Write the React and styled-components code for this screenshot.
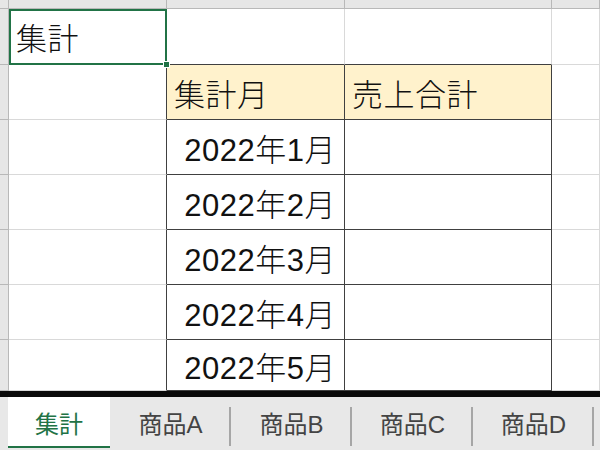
import styled, { createGlobalStyle } from 'styled-components';

const GlobalStyle = createGlobalStyle`
  html,
  body {
    margin: 0;
    padding: 0;
    background: #ffffff;
  }
  body {
    width: 600px;
    height: 450px;
    overflow: hidden;
    font-family: "Liberation Sans", "Noto Sans CJK JP", sans-serif;
  }
`;

const GRID = '#d9d9d9';
const EDGE = '#404040';
const HEAD = '#b8b8b8';
const GREEN = '#217346';

const COL_WIDTHS = [9, 158, 178, 207, 48];
const ROW_HEIGHTS = [9, 56, 55, 55, 55, 55, 55, 51];

const MONTHS = [1, 2, 3, 4, 5];

// one entry per sheet row (A..D), row headers are added while rendering
const sheet = [
  [{ text: '集計', selected: true }, {}, {}, {}],
  [
    {},
    { text: '集計月', fill: '#fff2cc' },
    { text: '売上合計', fill: '#fff2cc' },
    {},
  ],
  ...MONTHS.map((m) => [
    {},
    { text: `2022年${m}月`, align: 'right' },
    {},
    {},
  ]),
];

const inTable = (r, c) => r >= 1 && c >= 1 && c <= 2;

const borderFor = (r, c) => {
  const right = inTable(r, c) || (c === 0 && r >= 1) ? EDGE : GRID;
  const bottom = inTable(r, c) || (r === 0 && (c === 1 || c === 2)) ? EDGE : GRID;
  return { right, bottom };
};

const tabs = ['集計', '商品A', '商品B', '商品C', '商品D'];

export default function App() {
  return (
    <>
      <GlobalStyle />
      <Window>
        <Sheet>
          <HeaderCell />
          {COL_WIDTHS.slice(1).map((_, i) => (
            <HeaderCell key={`col-${i}`} />
          ))}
          {sheet.map((row, r) => [
            <HeaderCell key={`row-${r}`} />,
            ...row.map((cell, c) => {
              const { right, bottom } = borderFor(r, c);
              return (
                <Cell
                  key={`${r}-${c}`}
                  $right={right}
                  $bottom={bottom}
                  $fill={cell.fill}
                  $align={cell.align}
                  $selected={cell.selected}
                >
                  {cell.text}
                  {cell.selected && <FillHandle />}
                </Cell>
              );
            }),
          ])}
        </Sheet>
        <TabBar>
          <TabLead />
          {tabs.map((name, i) => (
            <Tab key={name} $active={i === 0}>
              {name}
            </Tab>
          ))}
        </TabBar>
      </Window>
    </>
  );
}

const Window = styled.div`
  display: flex;
  flex-direction: column;
  width: 600px;
  height: 450px;
  overflow: hidden;
`;

const Sheet = styled.div`
  display: grid;
  grid-template-columns: ${COL_WIDTHS.slice(0, -1).map((w) => `${w}px`).join(' ')} 1fr;
  grid-template-rows: ${ROW_HEIGHTS.map((h) => `${h}px`).join(' ')};
  height: 391px;
  overflow: hidden;
  flex-shrink: 0;
`;

const HeaderCell = styled.div`
  box-sizing: border-box;
  background: #e6e6e6;
  border-right: 1px solid ${HEAD};
  border-bottom: 1px solid ${HEAD};
`;

const Cell = styled.div`
  position: relative;
  box-sizing: border-box;
  display: flex;
  align-items: center;
  justify-content: ${(p) => (p.$align === 'right' ? 'flex-end' : 'flex-start')};
  padding: 0 8px 0 7px;
  background: ${(p) => p.$fill || '#ffffff'};
  border-right: 1px solid ${(p) => p.$right};
  border-bottom: 1px solid ${(p) => p.$bottom};
  color: #111111;
  font-size: 31px;
  font-weight: 300;
  letter-spacing: 0.5px;
  white-space: nowrap;
  outline: ${(p) => (p.$selected ? `2px solid ${GREEN}` : 'none')};
  outline-offset: -2px;
`;

const FillHandle = styled.span`
  position: absolute;
  right: -3px;
  bottom: -3px;
  width: 5px;
  height: 5px;
  background: ${GREEN};
  box-shadow: 0 0 0 1px #ffffff;
  z-index: 2;
`;

const TabBar = styled.div`
  display: flex;
  flex: 1;
  border-top: 6px solid #0a0a0a;
  padding-bottom: 2px;
  background: #e8e8e8;
`;

const TabLead = styled.div`
  width: 8px;
`;

const Tab = styled.div`
  position: relative;
  box-sizing: border-box;
  display: flex;
  align-items: center;
  justify-content: center;
  width: ${(p) => (p.$active ? '102px' : '121px')};
  padding-top: 2px;
  background: ${(p) => (p.$active ? '#ffffff' : 'transparent')};
  border-bottom: 2px solid ${(p) => (p.$active ? GREEN : 'transparent')};
  color: ${(p) => (p.$active ? GREEN : '#444444')};
  font-size: 24px;

  &::after {
    content: '';
    display: ${(p) => (p.$active ? 'none' : 'block')};
    position: absolute;
    right: 0;
    top: 10px;
    bottom: 0;
    width: 2px;
    background: #a6a6a6;
  }
`;
